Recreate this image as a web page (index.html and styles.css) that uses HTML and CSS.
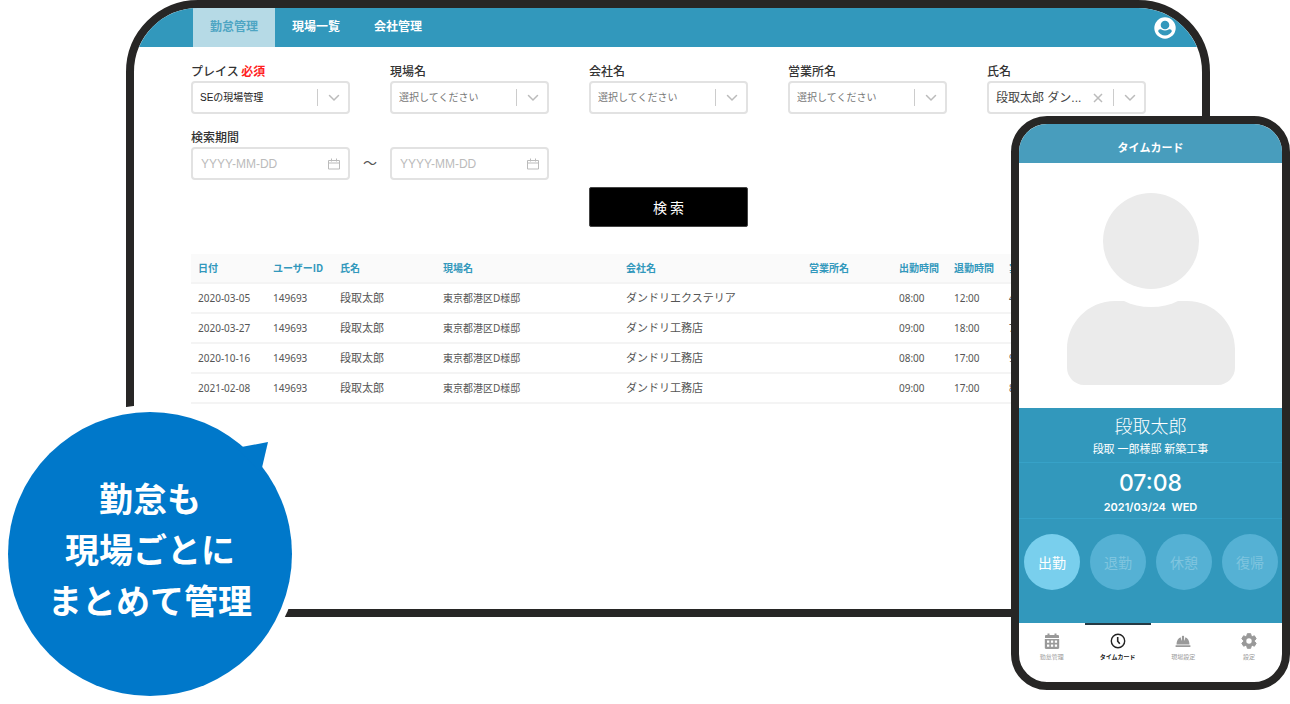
FILE: index.html
```html
<!DOCTYPE html>
<html lang="ja">
<head>
<meta charset="utf-8">
<meta name="viewport" content="width=device-width, initial-scale=1">
<title>勤怠管理</title>
<link rel="stylesheet" href="styles.css">
</head>
<body>
<svg class="sprite" aria-hidden="true">
  <symbol id="chevron" viewBox="0 0 12 8"><path d="M1.5 1.5 6 6l4.500-4.500" fill="none" stroke="currentColor" stroke-width="1.500" stroke-linecap="round"/></symbol>
  <symbol id="cross" viewBox="0 0 10 10"><path d="M1 1l8 8M9 1 1 9" fill="none" stroke="currentColor" stroke-width="1.500"/></symbol>
  <symbol id="calendar" viewBox="0 0 12 12"><path d="M.5 2.500h11v8.500H.5zM.5 5h11M3.500 .5v3M8.500 .5v3" fill="none" stroke="currentColor"/></symbol>
</svg>
<main class="scene">
  <section class="tablet">
    <header class="topbar">
      <nav class="tabs">
        <a class="tab tab-active" href="#kintai">勤怠管理</a>
        <a class="tab" href="#genba">現場一覧</a>
        <a class="tab" href="#kaisha">会社管理</a>
      </nav>
      <button class="account" type="button" aria-label="アカウント">
        <svg viewBox="0 0 22 22"><circle cx="11" cy="11" r="10.700" fill="#fff"/><circle cx="11" cy="8" r="4.300" fill="#3298bc"/><path d="M4.200 14.600c0-2 1.300-2.600 2.600-2.300 1 .3 1.700 1.200 4.200 1.200s3.200-.9 4.200-1.200c1.300-.3 2.600.3 2.600 2.300-1.200 2.400-3.700 3.900-6.800 3.900s-5.600-1.500-6.800-3.900z" fill="#3298bc"/></svg>
      </button>
    </header>
    <form class="search">
      <div class="field">
        <label for="place">プレイス <strong class="required">必須</strong></label>
        <div class="control">
          <select id="place" class="chosen"><option>SEの現場管理</option></select>
          <span class="marks"><span class="bar"></span><svg class="chevron"><use href="#chevron"/></svg></span>
        </div>
      </div>
      <div class="field">
        <label for="site">現場名</label>
        <div class="control">
          <select id="site"><option>選択してください</option></select>
          <span class="marks"><span class="bar"></span><svg class="chevron"><use href="#chevron"/></svg></span>
        </div>
      </div>
      <div class="field">
        <label for="company">会社名</label>
        <div class="control">
          <select id="company"><option>選択してください</option></select>
          <span class="marks"><span class="bar"></span><svg class="chevron"><use href="#chevron"/></svg></span>
        </div>
      </div>
      <div class="field">
        <label for="office">営業所名</label>
        <div class="control">
          <select id="office"><option>選択してください</option></select>
          <span class="marks"><span class="bar"></span><svg class="chevron"><use href="#chevron"/></svg></span>
        </div>
      </div>
      <div class="field">
        <label for="person">氏名</label>
        <div class="control">
          <select id="person" class="person"><option>段取太郎 ダン...</option></select>
          <span class="marks"><svg class="cross"><use href="#cross"/></svg><span class="bar"></span><svg class="chevron"><use href="#chevron"/></svg></span>
        </div>
      </div>
      <div class="period">
        <label for="from">検索期間</label>
        <div class="range">
          <div class="control">
            <input id="from" type="text" placeholder="YYYY-MM-DD">
            <span class="marks"><svg class="calendar"><use href="#calendar"/></svg></span>
          </div>
          <span class="tilde">〜</span>
          <div class="control">
            <input type="text" placeholder="YYYY-MM-DD" aria-label="検索期間の終了日">
            <span class="marks"><svg class="calendar"><use href="#calendar"/></svg></span>
          </div>
        </div>
      </div>
      <button class="submit" type="button">検 索</button>
    </form>
    <div class="results">
      <table>
        <colgroup><col class="c-date"><col class="c-user"><col class="c-name"><col class="c-site"><col class="c-site"><col class="c-office"><col class="c-time"><col class="c-time"><col></colgroup>
        <thead>
          <tr><th>日付</th><th>ユーザーID</th><th>氏名</th><th>現場名</th><th>会社名</th><th>営業所名</th><th>出勤時間</th><th>退勤時間</th><th>実働時間</th></tr>
        </thead>
        <tbody>
          <tr><td>2020-03-05</td><td>149693</td><td class="wide">段取太郎</td><td>東京都港区D様邸</td><td class="wide">ダンドリエクステリア</td><td></td><td>08:00</td><td>12:00</td><td>4:00</td></tr>
          <tr><td>2020-03-27</td><td>149693</td><td class="wide">段取太郎</td><td>東京都港区D様邸</td><td class="wide">ダンドリ工務店</td><td></td><td>09:00</td><td>18:00</td><td>7:00</td></tr>
          <tr><td>2020-10-16</td><td>149693</td><td class="wide">段取太郎</td><td>東京都港区D様邸</td><td class="wide">ダンドリ工務店</td><td></td><td>08:00</td><td>17:00</td><td>9:00</td></tr>
          <tr><td>2021-02-08</td><td>149693</td><td class="wide">段取太郎</td><td>東京都港区D様邸</td><td class="wide">ダンドリ工務店</td><td></td><td>09:00</td><td>17:00</td><td>8:00</td></tr>
        </tbody>
      </table>
    </div>
  </section>

  <section class="phone">
    <header class="phone-title">タイムカード</header>
    <div class="portrait">
      <svg viewBox="0 0 168 192"><circle cx="84" cy="48" r="48" fill="#ebebeb"/><path d="M48 108h9c8 4 17 6 27 6s19-2 27-6h9c27 0 48 22 48 48v19c0 9-8 17-17 17H17c-9 0-17-8-17-17v-19c0-26 21-48 48-48z" fill="#ebebeb"/></svg>
    </div>
    <div class="panel">
      <div class="who">
        <h2>段取太郎</h2>
        <p>段取 一郎様邸 新築工事</p>
      </div>
      <div class="clock">
        <time class="hour">07:08</time>
        <time class="day">2021/03/24&nbsp; WED</time>
      </div>
      <div class="punch">
        <button class="round round-on" type="button">出勤</button>
        <button class="round" type="button">退勤</button>
        <button class="round" type="button">休憩</button>
        <button class="round" type="button">復帰</button>
      </div>
    </div>
    <nav class="bottom">
      <a class="item" href="#kintai"><svg viewBox="0 0 16 16"><path d="M1 5V3.200C1 2.500 1.500 2 2.200 2H3.500V.5h2V2h5V.5h2V2h1.300c.7 0 1.200.5 1.200 1.200V5zM.8 6h14.400v8.800c0 .7-.5 1.200-1.200 1.200H2c-.7 0-1.200-.5-1.200-1.200z" fill="currentColor"/><path d="M3 7.500h2.300v2.200H3zM6.900 7.500h2.300v2.200H6.900zM10.800 7.500h2.300v2.200h-2.300zM3 11.500h2.300v2.200H3zM6.900 11.500h2.300v2.200H6.900zM10.800 11.500h2.300v2.200h-2.300z" fill="#fff"/></svg><span>勤怠管理</span></a>
      <a class="item item-on" href="#timecard"><svg viewBox="0 0 16 16"><circle cx="8" cy="8" r="6.700" fill="none" stroke="currentColor" stroke-width="1.400"/><path d="M7.700 4v4.300l2.100 2.400" fill="none" stroke="currentColor" stroke-width="1.600"/></svg><span>タイムカード</span></a>
      <a class="item" href="#genba"><svg viewBox="0 0 16 16"><path d="M1.500 11.500c0-3.700 1.700-6.300 4.100-7.200l.9 3.200.4-.1V3.500c0-.5.300-.7.700-.7h.8c.4 0 .7.200.7.700v3.900l.4.100.9-3.200c2.400.9 4.100 3.500 4.100 7.200zM.6 12.200h14.800V14H.6z" fill="currentColor"/></svg><span>現場設定</span></a>
      <a class="item" href="#settings"><svg viewBox="0 0 16 16"><path d="M6.300.7h3.400l.4 2.100 1.300.8 2-.8 1.800 3-1.600 1.400v1.600l1.600 1.400-1.800 3-2-.8-1.300.8-.4 2.100H6.300l-.4-2.100-1.300-.8-2 .8-1.800-3 1.600-1.400V7.200L.8 5.800l1.800-3 2 .8 1.300-.8z" fill="currentColor" stroke="currentColor" stroke-linejoin="round"/><circle cx="8" cy="8" r="2.700" fill="#fff"/></svg><span>設定</span></a>
    </nav>
  </section>

  <section class="bubble">
    <svg class="tail" viewBox="0 0 34 34"><path d="M0 10 32 4 25 34z" fill="#0078ca"/></svg>
    <p>勤怠も<br>現場ごとに<br>まとめて管理</p>
  </section>
</main>
</body>
</html>
```

FILE: styles.css
```css
* { box-sizing: border-box; }

body {
  margin: 0;
  background: #fff;
  color: #555;
  font-family: "Noto Sans", "Noto Sans CJK JP", sans-serif;
  font-size: 10px;
}

h2, p { margin: 0; font-weight: 400; }
a { color: inherit; text-decoration: none; }
button, input, select { font: inherit; color: inherit; }
button { border: 0; padding: 0; cursor: pointer; }
.sprite { display: none; }

.scene {
  position: relative;
  min-height: 100vh;
  padding: 0 80px 80px 126px;
}

/* Tablet */
.tablet {
  min-height: 617px;
  border: 8px solid #272625;
  border-radius: 72px;
  overflow: hidden;
  background: #fff;
}

.topbar {
  display: flex;
  justify-content: space-between;
  align-items: center;
  height: 39px;
  padding: 0 26px 0 59px;
  background: #3298bc;
  color: #fff;
}

.tabs { display: flex; align-self: stretch; }

.tab {
  display: flex;
  align-items: center;
  padding: 0 17px 4px;
  font-family: "Noto Sans CJK JP", sans-serif;
  font-size: 12px;
  font-weight: 700;
}

.tab-active { background: #b6dae6; color: #4ea5c3; }

.account { width: 22px; height: 22px; background: none; }
.account svg { display: block; width: 100%; }

.search {
  display: grid;
  grid-template-columns: repeat(5, 1fr);
  column-gap: 40px;
  padding: 14px 56px 0 57px;
}

.search label {
  display: block;
  font-family: "Noto Sans CJK JP", sans-serif;
  font-size: 12px;
  font-weight: 500;
  line-height: 20px;
  color: #333;
}

.required { color: #ff1f1f; font-weight: 700; }

.control { display: grid; min-width: 0; }
.control > * { grid-area: 1 / 1; min-width: 0; }

.control select, .control input {
  width: 100%;
  height: 33px;
  padding: 0 7px;
  border: 2px solid #e2e2e2;
  border-radius: 4px;
  background: #fff;
  appearance: none;
  font-family: "Liberation Sans", "Noto Sans CJK JP", sans-serif;
  font-size: 10px;
  color: #777;
}

.control input { font-size: 12px; padding: 0 8px; }
.control input::placeholder { color: #bbb; opacity: 1; }
.control select.chosen { color: #222; }
.control select.person { color: #444; font-size: 12px; }

.marks {
  display: flex;
  align-items: center;
  justify-self: end;
  gap: 10px;
  padding-right: 10px;
  color: #bbb;
  pointer-events: none;
}

.bar { width: 1px; height: 17px; background: #ccc; }
.chevron { width: 12px; height: 8px; }
.cross { width: 10px; height: 10px; }
.calendar { width: 12px; height: 12px; }

.period { grid-column: span 2; margin-top: 13px; }
.range { display: flex; align-items: center; }
.range .control { flex: 1; }
.tilde { width: 40px; padding-bottom: 4px; text-align: center; font-size: 14px; }

.submit {
  grid-column: 3;
  grid-row: 3;
  height: 40px;
  margin-top: 7px;
  border: 1px solid #444;
  border-radius: 2px;
  background: #000;
  color: #fff;
  font-family: "Noto Sans CJK JP", sans-serif;
  font-size: 14px;
}

.results { padding: 27px 56px 0 57px; }

table {
  width: 100%;
  table-layout: fixed;
  border-collapse: collapse;
  white-space: nowrap;
}

.c-date { width: 75px; }
.c-user { width: 67px; }
.c-name { width: 103px; }
.c-site { width: 183px; }
.c-office { width: 90px; }
.c-time { width: 55px; }

th, td {
  height: 30px;
  padding: 0 0 0 7px;
  border-bottom: 2px solid #f4f4f4;
  text-align: left;
  line-height: 14px;
}

th {
  height: 29px;
  background: #fafafa;
  color: #3298bc;
  font-family: "Noto Sans CJK JP", sans-serif;
  font-weight: 700;
}
.wide { font-size: 11px; }

/* Phone */
.phone {
  position: absolute;
  top: 116px;
  right: 0;
  width: 279px;
  border: 8px solid #272625;
  border-radius: 36px;
  overflow: hidden;
  background: #fff;
  color: #fff;
  text-align: center;
}

.phone-title {
  padding: 14px 0 5px;
  background: #489dbd;
  font-size: 11px;
  font-weight: 700;
  line-height: 20px;
}

.portrait { padding: 30px 0 23px; }
.portrait svg { display: block; width: 168px; margin: 0 auto; }

.panel { background: #3298bc; }

.who { padding: 4px 0 2px; border-bottom: 1px solid #37a2c8; }
.who h2 {
  font-family: "Noto Sans CJK JP", sans-serif;
  font-size: 18px;
  font-weight: 300;
  line-height: 26px;
}
.who p { font-size: 11px; line-height: 22px; }

.clock {
  display: grid;
  padding: 6px 0 1px;
  border-bottom: 1px solid #37a2c8;
  font-family: Inter, sans-serif;
}
.hour { font-size: 23px; font-weight: 500; line-height: 28px; }
.day { font-size: 11px; font-weight: 600; line-height: 20px; }

.punch {
  display: flex;
  justify-content: space-between;
  padding: 15px 4px 33px 5px;
}

.round {
  width: 56px;
  height: 56px;
  border-radius: 50%;
  background: #55b1d4;
  color: #7fc5df;
  font-family: "Noto Sans CJK JP", sans-serif;
  font-size: 14px;
}

.round-on { background: #79cfed; color: #fff; }

.bottom { display: grid; grid-template-columns: repeat(4, 1fr); }

.item {
  display: flex;
  flex-direction: column;
  align-items: center;
  gap: 2px;
  padding: 8px 0 19px;
  border-top: 2px solid transparent;
  color: #999;
  font-size: 6px;
  line-height: 12px;
}

.item svg { width: 16px; height: 16px; }
.item-on { border-top-color: #263a44; color: #222; font-weight: 700; }

/* Speech bubble */
.bubble {
  position: absolute;
  left: 8px;
  bottom: 8px;
  display: grid;
  place-items: center;
  width: 284px;
  height: 284px;
  padding-bottom: 12px;
  border-radius: 50%;
  box-shadow: 0 0 0 7px #fff;
  background: #0078ca;
  color: #fff;
  text-align: center;
}

.bubble p {
  font-family: "Noto Sans CJK JP", sans-serif;
  font-size: 34px;
  font-weight: 700;
  line-height: 51px;
}

.tail { position: absolute; top: 26px; right: 22px; width: 34px; height: 34px; }
```
